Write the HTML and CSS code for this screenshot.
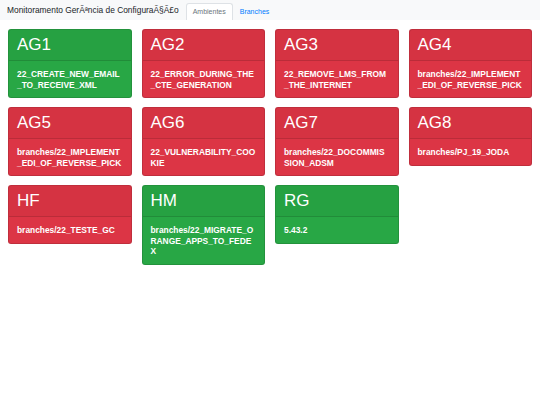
FILE: index.html
```html
<!DOCTYPE html>
<html lang="pt">
  <head>
    <meta charset="UTF-8" />
    <title>Monitoramento</title>
    <link rel="stylesheet" href="styles.css">
  </head>
  <body>
    <div class="navbar">
      <span class="brand">Monitoramento GerÃªncia de ConfiguraÃ§Ã£o</span>
      <ul class="tabs">
        <li class="tab active">Ambientes</li>
        <li class="tab">Branches</li>
      </ul>
    </div>
    <div class="grid">
      <div class="card ok">
        <div class="card-header">AG1</div>
        <div class="card-body">22_CREATE_NEW_EMAIL_TO_RECEIVE_XML</div>
      </div>
      <div class="card fail">
        <div class="card-header">AG2</div>
        <div class="card-body">22_ERROR_DURING_THE_CTE_GENERATION</div>
      </div>
      <div class="card fail">
        <div class="card-header">AG3</div>
        <div class="card-body">22_REMOVE_LMS_FROM_THE_INTERNET</div>
      </div>
      <div class="card fail">
        <div class="card-header">AG4</div>
        <div class="card-body">branches/22_IMPLEMENT_EDI_OF_REVERSE_PICK</div>
      </div>
      <div class="card fail">
        <div class="card-header">AG5</div>
        <div class="card-body">branches/22_IMPLEMENT_EDI_OF_REVERSE_PICK</div>
      </div>
      <div class="card fail">
        <div class="card-header">AG6</div>
        <div class="card-body">22_VULNERABILITY_COOKIE</div>
      </div>
      <div class="card fail">
        <div class="card-header">AG7</div>
        <div class="card-body">branches/22_DOCOMMISSION_ADSM</div>
      </div>
      <div class="card fail">
        <div class="card-header">AG8</div>
        <div class="card-body">branches/PJ_19_JODA</div>
      </div>
      <div class="card fail">
        <div class="card-header">HF</div>
        <div class="card-body">branches/22_TESTE_GC</div>
      </div>
      <div class="card ok">
        <div class="card-header">HM</div>
        <div class="card-body">branches/22_MIGRATE_ORANGE_APPS_TO_FEDEX</div>
      </div>
      <div class="card ok">
        <div class="card-header">RG</div>
        <div class="card-body">5.43.2</div>
      </div>
    </div>
  </body>
</html>
```

FILE: styles.css
```css
body {
  margin: 0;
  font-family: "Liberation Sans", Arial, sans-serif;
  background: #ffffff;
  color: #212529;
}
.navbar {
  display: flex;
  align-items: flex-end;
  height: 20px;
  padding: 0 7px;
  background-color: #f8f9fa;
}
.brand {
  font-size: 8.4px;
  line-height: 20px;
  align-self: center;
  margin-right: 7px;
}
.tabs {
  display: flex;
  list-style: none;
  margin: 0;
  padding: 0;
  height: 17px;
}
.tab {
  font-size: 7px;
  line-height: 16px;
  padding: 0 6px;
  color: #007bff;
  border: 1px solid transparent;
  border-bottom: none;
  border-radius: 3px 3px 0 0;
}
.tab.active {
  color: #6c757d;
  background-color: #ffffff;
  border-color: #dee2e6;
}
.grid {
  display: grid;
  grid-template-columns: repeat(4, 1fr);
  gap: 9px 10px;
  padding: 9px 8px;
  align-items: start;
}
.card {
  border: 1px solid rgba(0, 0, 0, 0.125);
  border-radius: 3px;
  color: #ffffff;
}
.card.ok {
  background-color: #28a745;
}
.card.fail {
  background-color: #dc3545;
}
.card-header {
  font-size: 17px;
  line-height: 20px;
  padding: 5px 8px;
  background-color: rgba(0, 0, 0, 0.03);
  border-bottom: 1px solid rgba(0, 0, 0, 0.125);
}
.card-body {
  font-size: 8.4px;
  font-weight: bold;
  line-height: 10.5px;
  padding: 8px 8px 7px;
  word-break: break-all;
}
```
